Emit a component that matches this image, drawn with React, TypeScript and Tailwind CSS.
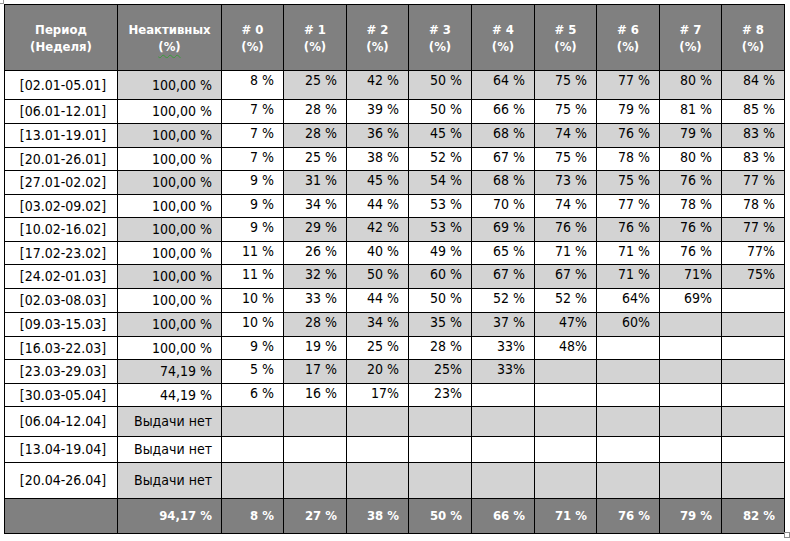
import React from "react";

type Row = {
  period: string;
  inactive: string;
  vals: string[];
  gray: boolean;
  grayFirst: boolean;
  h: string;
};

const mk = (
  period: string,
  inactive: string,
  vals: string[],
  gray: boolean,
  h: string,
  grayFirst = false
): Row => ({ period, inactive, vals, gray, grayFirst, h });

const rows: Row[] = [
  mk("[02.01-05.01]", "100,00 %", ["8 %", "25 %", "42 %", "50 %", "64 %", "75 %", "77 %", "80 %", "84 %"], true, "h-[29px]"),
  mk("[06.01-12.01]", "100,00 %", ["7 %", "28 %", "39 %", "50 %", "66 %", "75 %", "79 %", "81 %", "85 %"], false, "h-[24px]"),
  mk("[13.01-19.01]", "100,00 %", ["7 %", "28 %", "36 %", "45 %", "68 %", "74 %", "76 %", "79 %", "83 %"], true, "h-[24px]"),
  mk("[20.01-26.01]", "100,00 %", ["7 %", "25 %", "38 %", "52 %", "67 %", "75 %", "78 %", "80 %", "83 %"], false, "h-[23px]"),
  mk("[27.01-02.02]", "100,00 %", ["9 %", "31 %", "45 %", "54 %", "68 %", "73 %", "75 %", "76 %", "77 %"], true, "h-[24px]"),
  mk("[03.02-09.02]", "100,00 %", ["9 %", "34 %", "44 %", "53 %", "70 %", "74 %", "77 %", "78 %", "78 %"], false, "h-[23px]"),
  mk("[10.02-16.02]", "100,00 %", ["9 %", "29 %", "42 %", "53 %", "69 %", "76 %", "76 %", "76 %", "77 %"], true, "h-[24px]"),
  mk("[17.02-23.02]", "100,00 %", ["11 %", "26 %", "40 %", "49 %", "65 %", "71 %", "71 %", "76 %", "77%"], false, "h-[23px]"),
  mk("[24.02-01.03]", "100,00 %", ["11 %", "32 %", "50 %", "60 %", "67 %", "67 %", "71 %", "71%", "75%"], true, "h-[24px]"),
  mk("[02.03-08.03]", "100,00 %", ["10 %", "33 %", "44 %", "50 %", "52 %", "52 %", "64%", "69%", ""], false, "h-[24px]"),
  mk("[09.03-15.03]", "100,00 %", ["10 %", "28 %", "34 %", "35 %", "37 %", "47%", "60%", "", ""], true, "h-[24px]"),
  mk("[16.03-22.03]", "100,00 %", ["9 %", "19 %", "25 %", "28 %", "33%", "48%", "", "", ""], false, "h-[23px]"),
  mk("[23.03-29.03]", "74,19 %", ["5 %", "17 %", "20 %", "25%", "33%", "", "", "", ""], true, "h-[24px]"),
  mk("[30.03-05.04]", "44,19 %", ["6 %", "16 %", "17%", "23%", "", "", "", "", ""], false, "h-[23px]"),
  mk("[06.04-12.04]", "Выдачи нет", ["", "", "", "", "", "", "", "", ""], true, "h-[30px]", true),
  mk("[13.04-19.04]", "Выдачи нет", ["", "", "", "", "", "", "", "", ""], false, "h-[26px]"),
  mk("[20.04-26.04]", "Выдачи нет", ["", "", "", "", "", "", "", "", ""], true, "h-[36px]", true),
];

const footer = ["8 %", "27 %", "38 %", "50 %", "66 %", "71 %", "76 %", "79 %", "82 %"];
const colW = ["w-[62px]", "w-[63px]", "w-[62px]", "w-[63px]", "w-[63px]", "w-[62px]", "w-[63px]", "w-[62px]", "w-[63px]"];

export default function App() {
  return (
    <div className="relative w-[790px] h-[541px] bg-white overflow-hidden font-['DejaVu_Sans_Condensed','DejaVu_Sans',sans-serif] text-[14px] text-black">
      <div className="absolute left-0 top-0 w-[4px] h-[4px] border-r border-b border-[#9a9a9a]" />
      <div className="absolute left-[784px] top-[532px] w-[6px] h-[6px] border border-[#8a8a8a] bg-white" />
      <div className="pl-[4px] pt-[4px]">
        <table className="table-fixed border-collapse w-[781px]">
          <colgroup>
            <col className="w-[113px]" />
            <col className="w-[104px]" />
            {colW.map((c, i) => (
              <col key={i} className={c} />
            ))}
          </colgroup>
          <thead>
            <tr className="h-[66px]">
              <th className="border border-black bg-[#808080] text-white font-bold text-[13px] leading-[17px] text-center align-middle">
                Период
                <br />
                (Неделя)
              </th>
              <th className="border border-black bg-[#808080] text-white font-bold text-[13px] leading-[17px] text-center align-middle">
                <span className="underline decoration-wavy decoration-[#3a9a3a] decoration-1 underline-offset-[3px]" style={{ textDecorationLine: "none" }}>Неактивных</span>
                <br />
                <span className="underline decoration-wavy decoration-[#3a9a3a] decoration-1 underline-offset-[3px]">(%)</span>
              </th>
              {Array.from({ length: 9 }).map((_, i) => (
                <th
                  key={i}
                  className="border border-black bg-[#808080] text-white font-bold text-[13px] leading-[17px] text-center align-middle"
                >
                  # {i}
                  <br />
                  (%)
                </th>
              ))}
            </tr>
          </thead>
          <tbody>
            {rows.map((r, ri) => (
              <tr key={ri} className={r.h}>
                <td className="border border-black bg-white text-center align-middle pl-[4px] leading-[17px]">
                  {r.period}
                </td>
                <td
                  className={
                    r.gray
                      ? "border border-black bg-[#d3d3d3] text-right align-middle pr-[9px] leading-[17px]"
                      : "border border-black bg-white text-right align-middle pr-[9px] leading-[17px]"
                  }
                >
                  {r.inactive}
                </td>
                {r.vals.map((v, vi) => {
                  const g = vi === 0 ? r.grayFirst : r.gray;
                  return (
                    <td
                      key={vi}
                      className={
                        g
                          ? "border border-black bg-[#d3d3d3] text-right align-top pr-[9px] pt-[1px] leading-[17px]"
                          : "border border-black bg-white text-right align-top pr-[9px] pt-[1px] leading-[17px]"
                      }
                    >
                      {v}
                    </td>
                  );
                })}
              </tr>
            ))}
            <tr className="h-[35px]">
              <td className="border border-black bg-[#808080]" />
              <td className="border border-black bg-[#808080] text-white font-bold text-[13px] text-right align-middle pr-[9px]">
                94,17 %
              </td>
              {footer.map((f, i) => (
                <td
                  key={i}
                  className="border border-black bg-[#808080] text-white font-bold text-[13px] text-right align-middle pr-[9px]"
                >
                  {f}
                </td>
              ))}
            </tr>
          </tbody>
        </table>
      </div>
    </div>
  );
}
